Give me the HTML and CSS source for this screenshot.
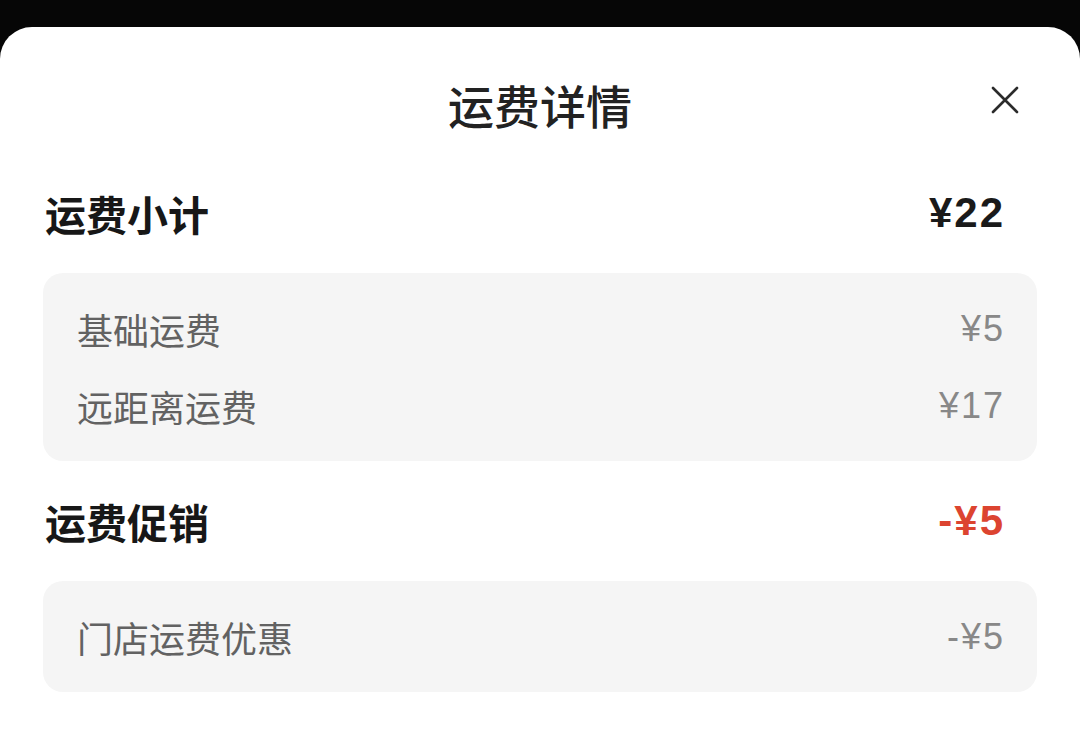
FILE: index.html
```html
<!DOCTYPE html>
<html lang="zh-CN">
<head>
  <meta charset="UTF-8" />
  <meta name="viewport" content="width=device-width, initial-scale=1.0"/>
  <title>运费详情</title>
  <link rel="stylesheet" href="styles.css">
</head>
<body>
  <div class="sheet">
    <div class="sheet-header">
      <h2>运费详情</h2>
      <button class="close-btn" aria-label="关闭">
        <svg width="28" height="28" viewBox="0 0 28 28">
          <path d="M2 2 L26 26 M26 2 L2 26" stroke="#2b2b2b" stroke-width="2.6" stroke-linecap="round" fill="none"/>
        </svg>
      </button>
    </div>

    <div class="section-row">
      <span class="section-title">运费小计</span>
      <span class="amount">¥22</span>
    </div>
    <div class="detail-card">
      <div class="detail-item">
        <span>基础运费</span>
        <span class="amount">¥5</span>
      </div>
      <div class="detail-item">
        <span>远距离运费</span>
        <span class="amount">¥17</span>
      </div>
    </div>

    <div class="section-row">
      <span class="section-title">运费促销</span>
      <span class="amount discount">-¥5</span>
    </div>
    <div class="detail-card">
      <div class="detail-item">
        <span>门店运费优惠</span>
        <span class="amount">-¥5</span>
      </div>
    </div>
  </div>
</body>
</html>
```

FILE: styles.css
```css
* { box-sizing: border-box; }

html, body {
  height: 100%;
}

body {
  margin: 0;
  background-color: #060606;
  font-family: "Noto Sans CJK SC", "Noto Sans", sans-serif;
  color: #1a1a1a;
  overflow: hidden;
}

.sheet {
  margin-top: 27px;
  height: calc(100% - 27px);
  background-color: #fff;
  border-radius: 32px 32px 0 0;
  padding: 0 43px 0 43px;
}

.sheet-header {
  position: relative;
  height: 154px;
  display: flex;
  align-items: center;
  justify-content: center;
}

.sheet-header h2 {
  margin: 0;
  font-size: 46px;
  font-weight: 500;
  color: #222;
  line-height: 1;
}

.close-btn {
  position: absolute;
  right: 18px;
  top: 59px;
  width: 28px;
  height: 28px;
  padding: 0;
  border: none;
  background: none;
  cursor: pointer;
}

.close-btn svg {
  display: block;
}

.section-row {
  height: 64px;
  display: flex;
  align-items: center;
  justify-content: space-between;
  padding: 0 34px 0 2px;
}

.section-row + .detail-card {
  margin-top: 28px;
}

.detail-card + .section-row {
  margin-top: 28px;
}

.section-title {
  font-size: 41px;
  font-weight: 700;
  color: #171717;
}

.amount {
  font-family: "Liberation Sans", Arial, sans-serif;
  letter-spacing: 2px;
  margin-right: -2px;
}

.section-row .amount {
  font-size: 42px;
  font-weight: 700;
  color: #1a1a1a;
}

.amount.discount {
  color: #dc4430;
}

.detail-card {
  background-color: #f5f5f5;
  border-radius: 20px;
  padding: 17px 34px 17px 34px;
}

.detail-item {
  height: 77px;
  display: flex;
  align-items: center;
  justify-content: space-between;
  font-size: 36px;
  color: #626262;
}

.detail-item .amount {
  font-size: 36px;
  color: #888;
}
```
